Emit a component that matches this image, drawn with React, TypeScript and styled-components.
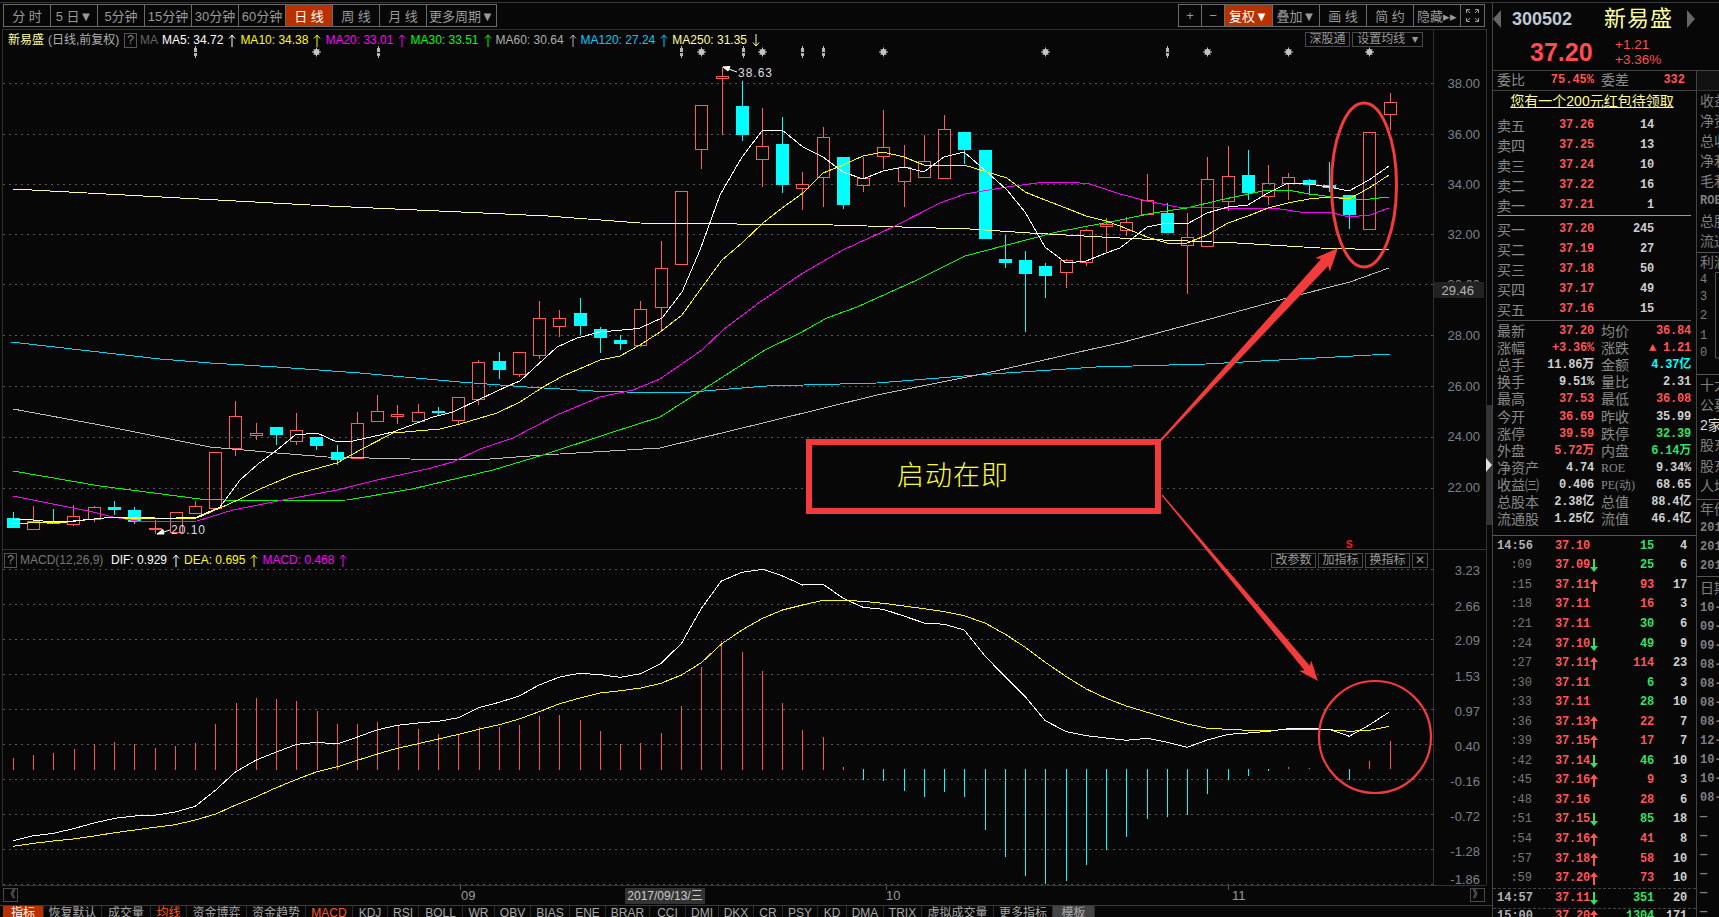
import React from "react";
import styled, { createGlobalStyle } from "styled-components";

const SANS = `"Liberation Sans", "Noto Sans CJK SC", sans-serif`;
const MONO = `"Liberation Mono", "Noto Sans CJK SC", monospace`;
const RED = "#ff5555";
const GREEN = "#33e066";
const CYAN = "#00ffff";
const LINE = "#3a3a3a";

const Global = createGlobalStyle`
  html, body { margin: 0; padding: 0; background: #070707; }
  * { box-sizing: border-box; }
`;

/* ---------- data ---------- */
type Candle = [number, number, number, number, number, "r" | "c"];
const candles: Candle[] = [
  [13, 512, 518, 528, 528, "c"], [33, 506, 521, 529, 529, "r"], [53, 509, 522, 523, 523, "c"], [73, 505, 516, 524, 526, "r"],
  [94, 506, 507, 519, 522, "r"], [114, 501, 507, 510, 515, "c"], [134, 507, 510, 522, 524, "c"], [155, 520, 528, 529, 534, "r"],
  [176, 512, 512, 532, 532, "r"], [195, 501, 506, 513, 513, "r"], [215, 452, 452, 508, 508, "r"], [235, 401, 416, 448, 456, "r"],
  [256, 423, 433, 435, 440, "r"], [276, 427, 427, 435, 445, "c"], [296, 413, 430, 441, 445, "r"], [316, 437, 437, 446, 450, "c"],
  [337, 445, 452, 460, 465, "c"], [357, 412, 423, 458, 458, "r"], [377, 395, 411, 421, 422, "r"], [397, 405, 414, 416, 424, "r"],
  [418, 404, 412, 421, 422, "r"], [438, 407, 411, 413, 415, "c"], [458, 397, 397, 420, 424, "r"], [478, 360, 362, 399, 405, "r"],
  [499, 352, 361, 370, 379, "c"], [519, 352, 352, 374, 377, "r"], [539, 301, 318, 355, 359, "r"], [559, 310, 318, 326, 337, "r"],
  [580, 298, 313, 326, 335, "c"], [600, 327, 329, 338, 353, "c"], [620, 335, 340, 344, 350, "c"], [640, 301, 309, 345, 347, "r"],
  [661, 241, 268, 307, 332, "r"], [681, 191, 191, 264, 264, "r"], [701, 105, 105, 149, 169, "r"], [722, 67, 76, 78, 135, "r"],
  [742, 81, 106, 135, 141, "c"], [762, 108, 146, 159, 187, "r"], [782, 117, 144, 185, 193, "c"], [802, 172, 184, 188, 210, "r"],
  [823, 127, 137, 177, 207, "r"], [843, 157, 157, 205, 209, "c"], [863, 157, 178, 185, 192, "r"], [883, 110, 147, 156, 169, "r"],
  [904, 145, 167, 181, 207, "r"], [924, 135, 161, 177, 177, "r"], [944, 115, 129, 178, 179, "r"], [964, 132, 132, 150, 164, "c"],
  [985, 150, 150, 239, 239, "c"], [1005, 235, 259, 263, 268, "c"], [1025, 251, 260, 274, 332, "c"], [1045, 263, 266, 276, 298, "c"],
  [1066, 259, 260, 272, 288, "r"], [1086, 229, 230, 262, 266, "r"], [1106, 218, 224, 226, 252, "r"], [1126, 217, 222, 230, 236, "r"],
  [1147, 174, 200, 214, 214, "r"], [1167, 203, 213, 233, 233, "c"], [1187, 213, 237, 245, 294, "r"], [1207, 157, 179, 246, 246, "r"],
  [1228, 146, 176, 201, 211, "r"], [1248, 150, 175, 193, 200, "c"], [1268, 165, 183, 196, 205, "r"], [1288, 173, 177, 183, 200, "r"],
  [1309, 179, 180, 185, 195, "c"], [1329, 162, 185, 188, 192, "c"], [1349, 195, 195, 215, 229, "c"], [1369, 132, 132, 229, 230, "r"],
  [1390, 93, 102, 114, 130, "r"],
];

const ma5 = "13,519 33,520 53,522 73,521 94,519 114,517 134,517 155,518 176,518 197,517 220,507 240,480 258,464 277,450 295,435 317,433 337,442 353,441 393,432 433,417 453,412 480,399 510,385 520,381 557,347 577,338 600,332 633,329 640,328 662,318 682,292 700,250 720,195 742,157 762,131 782,130 803,147 823,157 843,172 863,179 883,171 904,167 924,172 944,157 964,152 987,172 1007,190 1025,212 1045,247 1066,263 1086,261 1106,253 1120,248 1147,227 1167,223 1187,224 1207,213 1228,207 1248,205 1268,193 1288,183 1309,184 1329,187 1349,191 1369,180 1389,166";
const ma10 = "13,524 43,522 67,522 113,517 133,519 197,518 220,508 240,499 260,489 293,475 337,463 360,450 393,433 440,429 460,424 497,413 520,402 543,387 563,376 600,360 620,356 640,345 660,332 682,315 700,290 722,260 742,243 763,223 782,208 803,193 823,173 843,165 863,156 883,152 904,157 924,165 964,165 987,172 1007,178 1025,192 1045,200 1066,208 1086,216 1106,221 1120,226 1147,237 1167,243 1187,243 1207,235 1228,223 1248,216 1268,208 1288,203 1309,199 1329,197 1349,199 1369,188 1389,175";
const ma20 = "13,496 53,504 93,512 113,517 143,522 197,521 233,510 283,500 337,490 377,480 427,469 453,462 480,449 513,438 557,415 600,397 633,390 660,379 702,350 723,330 760,302 803,273 843,250 893,227 940,203 965,194 1007,187 1037,183 1070,182 1090,184 1120,194 1147,201 1177,207 1220,208 1273,208 1300,212 1333,213 1349,217 1370,215 1389,208";
const ma30 = "13,471 100,486 200,499 247,501 347,500 412,489 493,470 543,455 610,433 660,417 765,350 800,333 827,318 857,307 917,280 965,256 1007,245 1057,232 1120,220 1153,213 1187,208 1220,200 1263,191 1287,190 1310,194 1333,197 1353,199 1370,199 1389,197";
const ma60 = "13,409 100,425 160,437 210,447 277,453 327,457 410,459 477,460 543,455 660,448 767,422 877,395 987,373 1088,350 1120,343 1210,319 1287,298 1350,282 1389,268";
const ma120 = "11,342 160,359 210,363 277,367 360,373 460,382 527,387 593,391 660,393 691,392 767,386 877,383 976,375 1096,367 1206,364 1390,354";
const ma250 = "13,189 329,206 548,216 640,223 833,225 970,229 1030,233 1120,238 1163,240 1237,243 1320,248 1389,250";

const z12 = (pts: number[][]) => pts.map(([a, b]) => `${(a / 1.5525).toFixed(1)},${(565 + b / 3).toFixed(1)}`).join(" ");
const z11 = (pts: number[][]) => pts.map(([a, b]) => `${(1000 + a / 3).toFixed(1)},${(540 + b / 3).toFixed(1)}`).join(" ");

const dif =
  z12([[20,827],[50,813],[83,805],[114,791],[146,774],[178,760],[209,753],[240,751],[272,741],[303,724],[335,675],[366,620],[398,585],[429,561],[461,538],[492,532],[524,537],[555,516],[586,494],[617,481],[649,474],[681,469],[712,458],[743,428],[775,412],[806,393],[837,360],[869,336],[900,325],[932,329],[963,337],[995,326],[1026,296],[1058,235],[1089,130],[1120,48],[1152,22],[1184,13],[1215,33],[1246,60],[1278,58],[1309,100],[1340,127],[1371,133],[1403,153],[1435,174],[1466,178],[1497,195],[1530,275]]) +
  " " + z11([[16,410],[76,470],[136,542],[199,575],[259,587],[319,594],[379,601],[442,595],[502,607],[562,622],[622,600],[685,583],[745,579],[805,574],[865,566],[928,566],[988,568],[1048,589],[1108,555],[1168,516]]);
const dea =
  z12([[20,844],[52,835],[83,828],[114,822],[146,813],[178,803],[209,795],[240,787],[272,779],[303,765],[335,747],[366,720],[398,695],[429,668],[461,643],[492,620],[524,605],[555,586],[586,567],[617,550],[649,536],[681,522],[712,508],[743,493],[775,479],[806,462],[837,440],[869,416],[900,399],[932,384],[963,377],[995,369],[1026,355],[1058,330],[1089,293],[1120,237],[1152,195],[1184,160],[1215,135],[1246,120],[1278,106],[1309,106],[1340,109],[1371,115],[1403,123],[1435,131],[1466,140],[1497,152],[1530,175]]) +
  " " + z11([[16,283],[76,322],[136,367],[199,410],[259,447],[319,475],[379,498],[442,517],[502,535],[562,552],[622,565],[685,568],[745,571],[805,571],[865,569],[928,568],[988,569],[1048,574],[1108,571],[1168,559]]);

const histTop = [580,570,564,552,538,531,538,549,543,535,477,414,400,402,408,438,477,477,471,482,492,507,507,487,485,481,452,450,465,498,538,533,504,423,306,228,261,318,414,495,516,606];
const histDown = [645,648,678,695,681,695,795,876];
const histRight: [number, number, string][] = [[1005,857,"c"],[1025,876,"c"],[1045,884,"c"],[1066,881,"c"],[1086,865,"c"],[1106,850,"c"],[1126,837,"c"],[1147,819,"c"],[1167,817,"c"],[1187,815,"c"],[1207,794,"c"],[1228,780,"c"],[1248,776,"c"],[1268,771,"c"],[1288,767,"r"],[1309,768,"r"],[1349,780,"c"],[1369,761,"r"],[1390,741,"r"]];

const kGrid = [83, 134, 184, 234, 284, 335, 386, 437, 488];
const kLabels: [string, number][] = [["38.00",83],["36.00",134],["34.00",184],["32.00",234],["30.00",284],["28.00",335],["26.00",386],["24.00",436],["22.00",487]];
const mGrid = [569, 604, 639, 674, 709, 744, 779, 814, 849, 884];
const mLabels: [string, number][] = [["3.23",570],["2.66",606],["2.09",640],["1.53",676],["0.97",711],["0.40",746],["-0.16",781],["-0.72",816],["-1.28",851],["-1.86",879]];
const markers: [number, "d" | "s"][] = [[195,"d"],[316,"s"],[378,"d"],[681,"d"],[701,"s"],[743,"d"],[762,"s"],[802,"d"],[823,"d"],[883,"s"],[1045,"s"],[1167,"d"],[1207,"s"],[1288,"s"],[1369,"s"]];

const periods: [string, number, boolean?][] = [["分 时",47],["5 日▼",47],["5分钟",47],["15分钟",47],["30分钟",47],["60分钟",47],["日 线",47,true],["周 线",47],["月 线",47],["更多周期▼",69]];
const tools: [string, number, boolean?][] = [["+",23],["−",23],["复权▼",48,true],["叠加▼",47],["画 线",47],["简 约",47],["隐藏▸▸",47]];
const tabs: [string, number, string?][] = [["指标",41,"active"],["恢复默认",58],["成交量",49],["均线",36,"hot"],["资金博弈",60],["资金趋势",59],["MACD",47,"hot"],["KDJ",35],["RSI",31],["BOLL",44],["WR",32],["OBV",36],["BIAS",39],["ENE",36],["BRAR",44],["CCI",36],["DMI",33],["DKX",35],["CR",29],["PSY",35],["KD",29],["DMA",37],["TRIX",38],["虚拟成交量",72],["更多指标",59],["模板",42,"dim"]];

const legend: [string, string, "u" | "d"][] = [["MA5: 34.72","#ffffff","u"],["MA10: 34.38","#ffff00","u"],["MA20: 33.01","#ff00ff","u"],["MA30: 33.51","#00ff00","u"],["MA60: 30.64","#b0b0b0","u"],["MA120: 27.24","#00ccff","u"],["MA250: 31.35","#ffff99","d"]];

const asks: [string, string, string][] = [["卖五","37.26","14"],["卖四","37.25","13"],["卖三","37.24","10"],["卖二","37.22","16"],["卖一","37.21","1"]];
const bids: [string, string, string][] = [["买一","37.20","245"],["买二","37.19","27"],["买三","37.18","50"],["买四","37.17","49"],["买五","37.16","15"]];
const W = "#cfcfcf";
const stats: [string, string, string, string, string, string][] = [
  ["最新","37.20",RED,"均价","36.84",RED],["涨幅","+3.36%",RED,"涨跌","▲ 1.21",RED],["总手","11.86万",W,"金额","4.37亿",CYAN],
  ["换手","9.51%",W,"量比","2.31",W],["最高","37.53",RED,"最低","36.08",RED],["今开","36.69",RED,"昨收","35.99",W],
  ["涨停","39.59",RED,"跌停","32.39",GREEN],["外盘","5.72万",RED,"内盘","6.14万",GREEN],["净资产","4.74",W,"ROE","9.34%",W],
  ["收益㈢","0.406",W,"PE(动)","68.65",W],["总股本","2.38亿",W,"总值","88.4亿",W],["流通股","1.25亿",W,"流值","46.4亿",W],
];
type Tick = [string, string, "" | "u" | "d", string, "r" | "g", string];
const ticks: Tick[] = [
  ["14:56","37.10","","15","g","4"],[":09","37.09","d","25","g","6"],[":15","37.11","u","93","r","17"],[":18","37.11","","16","r","3"],
  [":21","37.11","","30","g","6"],[":24","37.10","d","49","g","9"],[":27","37.11","u","114","r","23"],[":30","37.11","","6","g","3"],
  [":33","37.11","","28","g","10"],[":36","37.13","u","22","r","7"],[":39","37.15","u","17","r","7"],[":42","37.14","d","46","g","10"],
  [":45","37.16","u","9","r","3"],[":48","37.16","","28","r","6"],[":51","37.15","d","85","g","18"],[":54","37.16","u","41","r","8"],
  [":57","37.18","u","58","r","10"],[":59","37.20","u","73","r","10"],
];
const lastTicks: Tick[] = [["14:57","37.11","d","351","g","20"],["15:00","37.20","u","1304","g","171"]];

type Fin = [string, number, ("line" | "white" | "mono")?];
const finA: Fin[] = [["收益",20],["净资产",20],["总收入",20],["净利润",20],["毛利率",20],["ROE",20,"mono"],["总股本",20],["流通股",21]];
const finB: Fin[] = [["十大",20],["公募",20],["2家",20,"white"],["股东",21],["股东",20],["人均",20],["",4,"line"],["年份",19],["2017",19,"mono"],["2016",19,"mono"],["2015",19,"mono"],["",1,"line"],["日期",22]];
const dates = ["10-","09-","09-","08-","08-","08-","08-","12-","10-","10-","08-","—","—","—","—","—","—"];

function arrowPts(tx: number, ty: number, hx: number, hy: number, shaft: number, headW: number, headL: number) {
  const L = Math.hypot(hx - tx, hy - ty), dx = (hx - tx) / L, dy = (hy - ty) / L, nx = -dy, ny = dx;
  const bx = hx - dx * headL, by = hy - dy * headL;
  const p = (a: number, b: number) => `${a.toFixed(1)},${b.toFixed(1)}`;
  return [p(tx + nx * 0.7, ty + ny * 0.7), p(bx + nx * shaft, by + ny * shaft), p(bx + nx * headW - dx * 3, by + ny * headW - dy * 3), p(hx, hy), p(bx - nx * headW - dx * 3, by - ny * headW - dy * 3), p(bx - nx * shaft, by - ny * shaft), p(tx - nx * 0.7, ty - ny * 0.7)].join(" ");
}

/* ---------- styled parts ---------- */
const Page = styled.div`
  width: 1719px; height: 917px; overflow: hidden; background: #070707; padding-top: 2px;
  font-family: ${SANS}; color: #999;
`;
const Frame = styled.div`display: flex; height: 915px; border-top: 1px solid ${LINE};`;
const Main = styled.div`position: relative; width: 1492px; flex: none; display: flex; flex-direction: column;`;
const TopBar = styled.div`height: 26px; flex: none; padding: 1px 7px 0 3px; display: flex; justify-content: space-between; align-items: flex-start;`;
const BtnGroup = styled.div`display: flex; height: 23px; border: 1px solid #6a6a6a;`;
const ToolBtn = styled.div<{ $w: number; $on?: boolean }>`
  width: ${(p) => p.$w}px; display: flex; align-items: center; justify-content: center; white-space: pre;
  font-size: 13px; border-right: 1px solid #6a6a6a; margin-right: 0;
  background: ${(p) => (p.$on ? "#b83200" : "transparent")}; color: ${(p) => (p.$on ? "#fff" : "#9a9a9a")};
  &:last-child { border-right: none; }
`;
const FullBtn = styled.div`width: 23px; display: flex; align-items: center; justify-content: center;`;
const ChartPanel = styled.div<{ $h: number }>`position: relative; height: ${(p) => p.$h}px; flex: none;`;
const ChartSvg = styled.svg`
  display: block; width: 1492px; height: 100%;
  text { font-family: ${SANS}; font-size: 13px; fill: #79828a; }
  text.tip { fill: #ddd; font-size: 12px; letter-spacing: 1px; }
  text.box { fill: #b5b5b5; }
  text.sig { fill: #ff1a1a; font-size: 10px; font-weight: 700; }
`;
const Legend = styled.div`position: absolute; left: 8px; display: flex; align-items: center; white-space: nowrap; font-size: 12px; line-height: 15px;`;
const KLegend = styled(Legend)`top: 4px;`;
const MLegend = styled(Legend)`top: 3px; left: 4px;`;
const StockTag = styled.span`color: #ffffa0; width: 40px;`;
const Adj = styled.span`color: #b0b0b0; width: 76px;`;
const Q = styled.span`width: 13px; height: 15px; border: 1px solid #555; color: #888; display: flex; align-items: center; justify-content: center; font-size: 12px;`;
const MaTag = styled.span`color: #666; margin: 0 1px 0 3px; width: 21px;`;
const MacdTag = styled.span`color: #777; margin-left: 3px; width: 91px;`;
const LegendItem = styled.span<{ $c: string }>`display: flex; align-items: center; color: ${(p) => p.$c}; margin-right: 4px; gap: 5px;`;
const OverBtns = styled.div`position: absolute; top: 3px; right: 69px; display: flex; gap: 2px;`;
const MacdBtns = styled(OverBtns)`right: 64px;`;
const OverBtn = styled.div<{ $w: number }>`
  width: ${(p) => p.$w}px; height: 15px; border: 1px solid #4a4a4a; color: #9a9a9a; font-size: 12px; line-height: 13px;
  display: flex; align-items: center; justify-content: center; white-space: pre;
`;
const AxisRow = styled.div`position: relative; height: 19px; flex: none; display: flex; justify-content: space-between; padding: 2px 7px 0 3px;`;
const NavBtn = styled.div`position: relative; z-index: 1; width: 15px; height: 14px; border: 1px solid #4a4a4a; color: #999; font-size: 10px; line-height: 11px; text-align: center;`;
const AxisSvg = styled(ChartSvg)`position: absolute; left: 0; top: 0;`;
const DateBadge = styled.div`position: absolute; left: 625px; top: 2px; width: 80px; height: 16px; background: #333; color: #ccc; font-size: 12px; line-height: 16px; text-align: center; white-space: nowrap; overflow: hidden;`;
const TabBar = styled.div`height: 12px; flex: none; overflow: hidden; display: flex; padding-left: 3px; border-top: 1px solid ${LINE};`;
const Tab = styled.div<{ $w: number; $kind?: string }>`
  width: ${(p) => p.$w}px; height: 20px; flex: none; text-align: center; font-size: 12px; line-height: 14px; white-space: nowrap;
  border-right: 1px solid #2c2c2c;
  color: ${(p) => (p.$kind === "active" ? "#fff" : p.$kind === "hot" ? "#ff5a1f" : "#a8a8a8")};
  background: ${(p) => (p.$kind === "active" ? "#b83200" : p.$kind === "dim" ? "#444" : "transparent")};
`;
const Overlay = styled.svg`position: absolute; left: 0; top: -3px; width: 1492px; height: 917px; pointer-events: none;`;
const Callout = styled.div`
  position: absolute; left: 806px; top: 436px; width: 355px; height: 75px; border: 6px solid #f23c3c; background: #070707;
  color: #ffff33; font-size: 27px; line-height: 63px; padding-left: 85px; font-weight: 300; letter-spacing: 1px;
`;
const Handle = styled.div`position: absolute; left: 1486px; top: 402px; width: 6px; height: 120px; background: #333; display: flex; align-items: center;`;
const HandleTip = styled.div`width: 0; height: 0; border-left: 6px solid #ddd; border-top: 7px solid transparent; border-bottom: 7px solid transparent;`;

const Side = styled.div`width: 227px; flex: none; display: flex; flex-direction: column; border-left: 1px solid #444;`;
const SideHead = styled.div`height: 32px; flex: none; display: flex; align-items: center;`;
const Tri = styled.div<{ $dir: "l" | "r"; $ml?: number }>`
  width: 0; height: 0; margin-left: ${(p) => p.$ml || 0}px; border-top: 9px solid transparent; border-bottom: 9px solid transparent;
  ${(p) => (p.$dir === "l" ? "border-right: 8px solid #666;" : "border-left: 8px solid #666;")}
`;
const Code = styled.div`margin-left: 11px; font-size: 18px; font-weight: 700; color: #bccad6; width: 92px;`;
const Name = styled.div`font-size: 22px; letter-spacing: 1px; color: #ffffa0; line-height: 24px;`;
const PriceRow = styled.div`height: 36px; flex: none; display: flex; align-items: center; border-bottom: 1px solid #444; padding-left: 37px;`;
const BigPrice = styled.div`font-size: 25px; font-weight: 700; color: #ff4d4d; width: 85px;`;
const Change = styled.div`font-size: 13.5px; line-height: 15px; color: #ff4d4d; padding-bottom: 1px;`;
const SideBody = styled.div`flex: 1; display: flex; min-height: 0;`;
const Quote = styled.div`width: 204px; flex: none; border-right: 1px solid #444; overflow: hidden;`;
const Wei = styled.div`height: 20px; border-bottom: 1px solid #444; display: grid; grid-template-columns: 50px 47px 68px 23px; align-items: center; padding-left: 4px; font-size: 14px; line-height: 17px; color: #8a8a8a;`;
const WeiVal = styled.span`font-family: ${MONO}; font-size: 12px; font-weight: 700; color: ${RED}; justify-self: end;`;
const WeiLabel = styled.span`padding-left: 7px; white-space: nowrap;`;
const Packet = styled.div`height: 24px; text-align: center; font-size: 14px; line-height: 21px; color: #ffff99; text-decoration: underline; padding-right: 5px; white-space: nowrap;`;
const Book = styled.div<{ $rule?: boolean }>`
  margin: 0 5px 0 4px; ${(p) => p.$rule && "border-top: 1px solid #9a9a9a; padding-top: 3px;"}
`;
const BookRow = styled.div`height: 20px; display: grid; grid-template-columns: 44px 53px 60px; align-items: center; font-size: 14px; color: #8a8a8a;`;
const Num = styled.span<{ $c?: string }>`
  font-family: ${MONO}; font-size: 12px; font-weight: 700; text-align: right; letter-spacing: -0.2px; white-space: nowrap;
  color: ${(p) => p.$c || "#cfcfcf"};
`;
const Stats = styled.div`margin: 1px 5px 0 4px; border-top: 1px solid #555; padding-top: 2px; height: 215px;`;
const StatRow = styled.div`height: 17.1px; display: grid; grid-template-columns: 97px 90px; column-gap: 7px; font-size: 14px; color: #8a8a8a;`;
const StatCell = styled.div`display: flex; justify-content: space-between; align-items: center; white-space: nowrap; line-height: 17px;`;
const StatLabel = styled.span<{ $m?: boolean }>`${(p) => p.$m && `font-family: "Liberation Serif", serif; font-size: 12px;`}`;
const Ticks = styled.div`border-top: 1px solid #555; margin-top: 0;`;
const TickRow = styled.div<{ $last?: boolean; $end?: boolean }>`
  height: ${(p) => (p.$end ? 20 : p.$last ? 20 : 19.56)}px; display: grid; grid-template-columns: 35px 58px 10px 54px 33px; align-items: ${(p) => (p.$end ? "start" : "center")};
  padding-left: 4px; ${(p) => p.$last && "border-top: 1px dashed #444;"}
`;
const TickTime = styled.span<{ $strong?: boolean }>`
  font-family: ${MONO}; font-size: 12px; text-align: right; white-space: nowrap;
  color: ${(p) => (p.$strong ? "#b0b0b0" : "#777")}; font-weight: ${(p) => (p.$strong ? 700 : 400)};
`;
const TickPrice = styled(Num)`padding-left: 23px; text-align: left;`;
const Arrow = styled.svg`display: block; margin-top: 1px;`;
const Finance = styled.div`flex: 1; overflow: hidden; white-space: nowrap;`;
const FinHead = styled.div`height: 20px; background: #121212; border-bottom: 1px solid #333;`;
const FinRow = styled.div<{ $h: number; $kind?: string }>`
  height: ${(p) => p.$h}px; padding-left: 3px; font-size: ${(p) => (p.$kind === "mono" ? 12 : 14)}px; line-height: ${(p) => p.$h}px; overflow: hidden;
  font-family: ${(p) => (p.$kind === "mono" ? MONO : SANS)}; font-weight: ${(p) => (p.$kind === "mono" ? 700 : 400)};
  color: ${(p) => (p.$kind === "white" ? "#ddd" : "#7f7f7f")};
  ${(p) => p.$kind === "line" && "border-bottom: 1px solid #555;"}
`;
const FinRule = styled.div`border-top: 1px solid #555;`;
const FinChart = styled.svg`display: block; width: 22px; height: 102px; text { font-family: ${MONO}; font-size: 12px; fill: #7f7f7f; }`;

/* ---------- small drawings ---------- */
const ThinArrow = ({ c, d }: { c: string; d?: boolean }) => (
  <svg width="8" height="13" viewBox="0 0 8 13">
    <path d={d ? "M4 0V12M1 8.5L4 12L7 8.5" : "M4 13V1M1 4.5L4 1L7 4.5"} fill="none" stroke={c} strokeWidth="1" />
  </svg>
);
const FatArrow = ({ d }: { d?: boolean }) => (
  <Arrow width="8" height="13" viewBox="0 0 8 13">
    {d ? <path d="M3 0H5V8H8L4 13L0 8H3Z" fill={GREEN} /> : <path d="M3 13H5V5H8L4 0L0 5H3Z" fill={RED} />}
  </Arrow>
);
const Marker = ({ x, kind }: { x: number; kind: "d" | "s" }) =>
  kind === "d" ? (
    <g fill="#b8b8b8" shapeRendering="crispEdges">
      <rect x={x - 1} y={48} width={3} height={8} />
      <rect x={x} y={46} width={1} height={12} />
      <rect x={x - 1} y={52} width={3} height={1} fill="#070707" />
    </g>
  ) : (
    <g stroke="#c4c4c4" strokeWidth="1" fill="#c4c4c4">
      <circle cx={x + 0.5} cy={52} r={2.6} />
      <path d={`M${x + 0.5} 47.5V56.5M${x - 4} 52H${x + 5}M${x - 2.5} 49L${x + 3.5} 55M${x - 2.5} 55L${x + 3.5} 49`} />
    </g>
  );

const Candles = () => (
  <g shapeRendering="crispEdges">
    {candles.map(([x, hi, top, bot, lo, k], i) => {
      const c = k === "r" ? "#ff5c5c" : CYAN;
      return (
        <g key={i} stroke={c} strokeWidth="1">
          {hi < top && <line x1={x + 0.5} x2={x + 0.5} y1={hi} y2={top} />}
          {lo > bot && <line x1={x + 0.5} x2={x + 0.5} y1={bot} y2={lo} />}
          {k === "r" ? (
            <rect x={x - 6 + 0.5} y={top + 0.5} width={12} height={Math.max(bot - top, 1)} fill="none" />
          ) : (
            <rect x={x - 6} y={top} width={13} height={Math.max(bot - top, 2)} fill={c} stroke="none" />
          )}
        </g>
      );
    })}
  </g>
);
const MaLine = ({ p, c }: { p: string; c: string }) => <polyline points={p} fill="none" stroke={c} strokeWidth={1} shapeRendering="crispEdges" />;

export default function App() {
  return (
    <>
      <Global />
      <Page>
        <Frame>
          <Main>
            <TopBar>
              <BtnGroup>
                {periods.map(([t, w, on]) => (
                  <ToolBtn key={t} $w={w} $on={on}>{t}</ToolBtn>
                ))}
              </BtnGroup>
              <BtnGroup>
                {tools.map(([t, w, on]) => (
                  <ToolBtn key={t} $w={w} $on={on}>{t}</ToolBtn>
                ))}
                <FullBtn>
                  <svg width="13" height="13" viewBox="0 0 13 13" fill="none" stroke="#9a9a9a">
                    <path d="M0.5 4V0.5H4M9 0.5H12.5V4M12.5 9V12.5H9M4 12.5H0.5V9M1 1L4 4M12 1L9 4M12 12L9 9M1 12L4 9" />
                  </svg>
                </FullBtn>
              </BtnGroup>
            </TopBar>

            <ChartPanel $h={521}>
              <ChartSvg viewBox="0 29 1492 521">
                <g shapeRendering="crispEdges">
                  <line x1="2" x2="1486" y1="29.5" y2="29.5" stroke="#2f2f2f" />
                  <line x1="2.5" x2="2.5" y1="29" y2="550" stroke="#2f2f2f" />
                  <line x1="1433.5" x2="1433.5" y1="29" y2="550" stroke="#2f2f2f" />
                  <line x1="1486.5" x2="1486.5" y1="29" y2="550" stroke="#333" />
                  <line x1="2" x2="1486" y1="549.5" y2="549.5" stroke="#333" />
                  {kGrid.map((y) => (
                    <line key={y} x1="3" x2="1433" y1={y + 0.5} y2={y + 0.5} stroke="#555" strokeDasharray="2 4" />
                  ))}
                </g>
                {markers.map(([x, k], i) => (
                  <Marker key={i} x={x} kind={k} />
                ))}
                <Candles />
                <MaLine p={ma250} c="#ffff99" />
                <MaLine p={ma120} c="#00d8f0" />
                <MaLine p={ma60} c="#bdbdbd" />
                <MaLine p={ma30} c="#00ff00" />
                <MaLine p={ma20} c="#ff00ff" />
                <MaLine p={ma10} c="#ffff00" />
                <MaLine p={ma5} c="#ffffff" />
                {kLabels.map(([t, y]) => (
                  <text key={t} x="1480" y={y + 5} textAnchor="end">{t}</text>
                ))}
                <rect x="1434" y="282" width="50" height="16" fill="#222" />
                <text className="box" x="1474" y="295" textAnchor="end">29.46</text>
                <g stroke="#fff" strokeWidth="1" fill="#fff">
                  <path d="M723 67L737 72" fill="none" />
                  <path d="M723 67L730 66.5L728 71Z" />
                  <path d="M157 534L170 530" fill="none" />
                  <path d="M157 534L163 529.5L164 534Z" />
                </g>
                <text className="tip" x="738" y="77">38.63</text>
                <text className="tip" x="171" y="534">20.10</text>
                <text className="sig" x="1346" y="548">S</text>
              </ChartSvg>
              <KLegend>
                <StockTag>新易盛</StockTag>
                <Adj>(日线,前复权)</Adj>
                <Q>?</Q>
                <MaTag>MA</MaTag>
                {legend.map(([t, c, d]) => (
                  <LegendItem key={t} $c={c}>
                    {t}
                    <ThinArrow c={c} d={d === "d"} />
                  </LegendItem>
                ))}
              </KLegend>
              <OverBtns>
                <OverBtn $w={45}>深股通</OverBtn>
                <OverBtn $w={71}>{"设置均线  ▾"}</OverBtn>
              </OverBtns>
            </ChartPanel>

            <ChartPanel $h={336}>
              <ChartSvg viewBox="0 550 1492 336">
                <g shapeRendering="crispEdges">
                  <line x1="2.5" x2="2.5" y1="550" y2="886" stroke="#2f2f2f" />
                  <line x1="1433.5" x2="1433.5" y1="550" y2="885" stroke="#333" />
                  <line x1="1486.5" x2="1486.5" y1="550" y2="885" stroke="#333" />
                  <line x1="2" x2="1486" y1="885.5" y2="885.5" stroke="#333" />
                  {mGrid.map((y) => (
                    <line key={y} x1="3" x2="1433" y1={y + 0.5} y2={y + 0.5} stroke="#555" strokeDasharray="2 4" />
                  ))}
                  {histTop.map((t, i) => {
                    const x = Math.round(13 + 20.24 * i) + 0.5;
                    return <line key={i} x1={x} x2={x} y1={565 + t / 3} y2={769.5} stroke="#ff5050" />;
                  })}
                  {histDown.slice(0, 7).map((t, i) => {
                    const x = Math.round(13 + 20.24 * (42 + i)) + 0.5;
                    return <line key={i} x1={x} x2={x} y1={769} y2={565 + t / 3} stroke={CYAN} />;
                  })}
                  {histRight.map(([x, y, k]) => (
                    <line key={x} x1={x + 0.5} x2={x + 0.5} y1={769} y2={y} stroke={k === "c" ? CYAN : "#ff5050"} />
                  ))}
                </g>
                <MaLine p={dea} c="#ffff00" />
                <MaLine p={dif} c="#ffffff" />
                {mLabels.map(([t, y]) => (
                  <text key={t} x="1480" y={y + 5} textAnchor="end">{t}</text>
                ))}
              </ChartSvg>
              <MLegend>
                <Q>?</Q>
                <MacdTag>MACD(12,26,9)</MacdTag>
                <LegendItem $c="#ffffff">DIF: 0.929<ThinArrow c="#ffffff" /></LegendItem>
                <LegendItem $c="#ffff00">DEA: 0.695<ThinArrow c="#ffff00" /></LegendItem>
                <LegendItem $c="#ff00ff">MACD: 0.468<ThinArrow c="#ff00ff" /></LegendItem>
              </MLegend>
              <MacdBtns>
                <OverBtn $w={45}>改参数</OverBtn>
                <OverBtn $w={45}>加指标</OverBtn>
                <OverBtn $w={45}>换指标</OverBtn>
                <OverBtn $w={16}>✕</OverBtn>
              </MacdBtns>
            </ChartPanel>

            <AxisRow>
              <AxisSvg viewBox="0 0 1492 19">
                <g stroke="#555" shapeRendering="crispEdges">
                  <line x1="460.5" x2="460.5" y1="0" y2="4" />
                  <line x1="886.5" x2="886.5" y1="0" y2="4" />
                  <line x1="1228.5" x2="1228.5" y1="0" y2="4" />
                </g>
                <text x="461" y="14" style={{ fill: "#999" }}>09</text>
                <text x="886" y="14" style={{ fill: "#999" }}>10</text>
                <text x="1232" y="14" style={{ fill: "#999" }}>11</text>
              </AxisSvg>
              <NavBtn>《</NavBtn>
              <NavBtn>》</NavBtn>
              <DateBadge>2017/09/13/三</DateBadge>
            </AxisRow>
            <TabBar>
              {tabs.map(([t, w, k]) => (
                <Tab key={t} $w={w} $kind={k}>{t}</Tab>
              ))}
            </TabBar>

            <Overlay viewBox="0 0 1492 917">
              <ellipse cx="1364" cy="185" rx="32.5" ry="82" fill="none" stroke="#f23c3c" strokeWidth="3" />
              <circle cx="1375" cy="737" r="56" fill="none" stroke="#f23c3c" strokeWidth="2.2" />
              <polygon points={arrowPts(1150, 452, 1338, 248, 5, 10, 20)} fill="#f23c3c" />
              <polygon points={arrowPts(1162, 495, 1318, 681, 3.5, 8, 17)} fill="#f23c3c" />
            </Overlay>
            <Callout>启动在即</Callout>
            <Handle><HandleTip /></Handle>
          </Main>

          <Side>
            <SideHead>
              <Tri $dir="l" />
              <Code>300502</Code>
              <Name>新易盛</Name>
              <Tri $dir="r" $ml={14} />
            </SideHead>
            <PriceRow>
              <BigPrice>37.20</BigPrice>
              <Change>
                +1.21
                <br />
                +3.36%
              </Change>
            </PriceRow>
            <SideBody>
              <Quote>
                <Wei>
                  <span>委比</span>
                  <WeiVal>75.45%</WeiVal>
                  <WeiLabel>委差</WeiLabel>
                  <WeiVal>332</WeiVal>
                </Wei>
                <Packet>您有一个200元红包待领取</Packet>
                <Book>
                  {asks.map(([l, p, v]) => (
                    <BookRow key={l}>
                      <span>{l}</span>
                      <Num $c={RED}>{p}</Num>
                      <Num>{v}</Num>
                    </BookRow>
                  ))}
                </Book>
                <Book $rule>
                  {bids.map(([l, p, v]) => (
                    <BookRow key={l}>
                      <span>{l}</span>
                      <Num $c={RED}>{p}</Num>
                      <Num>{v}</Num>
                    </BookRow>
                  ))}
                </Book>
                <Stats>
                  {stats.map(([a, b, c, d, e, f]) => (
                    <StatRow key={a}>
                      <StatCell>
                        <StatLabel>{a}</StatLabel>
                        <Num $c={c}>{b}</Num>
                      </StatCell>
                      <StatCell>
                        <StatLabel $m={d === "ROE" || d === "PE(动)"}>{d}</StatLabel>
                        <Num $c={f}>{e}</Num>
                      </StatCell>
                    </StatRow>
                  ))}
                </Stats>
                <Ticks>
                  {ticks.map(([t, p, a, v, k, n]) => (
                    <TickRow key={t}>
                      <TickTime $strong={t.length > 3}>{t}</TickTime>
                      <TickPrice $c={RED}>{p}</TickPrice>
                      {a ? <FatArrow d={a === "d"} /> : <span />}
                      <Num $c={k === "r" ? RED : GREEN}>{v}</Num>
                      <Num>{n}</Num>
                    </TickRow>
                  ))}
                  {lastTicks.map(([t, p, a, v, k, n], i) => (
                    <TickRow key={t} $last $end={i === 1}>
                      <TickTime $strong>{t}</TickTime>
                      <TickPrice $c={RED}>{p}</TickPrice>
                      {a ? <FatArrow d={a === "d"} /> : <span />}
                      <Num $c={k === "r" ? RED : GREEN}>{v}</Num>
                      <Num>{n}</Num>
                    </TickRow>
                  ))}
                </Ticks>
              </Quote>
              <Finance>
                <FinHead />
                {finA.map(([t, h, k], i) => (
                  <FinRow key={i} $h={h} $kind={k}>{t}</FinRow>
                ))}
                <FinRule />
                <FinRow $h={19}>利润</FinRow>
                <FinChart viewBox="0 0 22 102">
                  <text x="3" y="11">4</text>
                  <text x="3" y="28">3</text>
                  <text x="3" y="47">2</text>
                  <text x="3" y="67">1</text>
                  <text x="3" y="84">0</text>
                  <path d="M22 0.5H18.5V86H22" fill="none" stroke="#555" />
                </FinChart>
                <FinRule />
                {finB.map(([t, h, k], i) => (
                  <FinRow key={i} $h={h} $kind={k}>{t}</FinRow>
                ))}
                {dates.map((d, i) => (
                  <FinRow key={i} $h={19} $kind="mono">{d}</FinRow>
                ))}
              </Finance>
            </SideBody>
          </Side>
        </Frame>
      </Page>
    </>
  );
}
